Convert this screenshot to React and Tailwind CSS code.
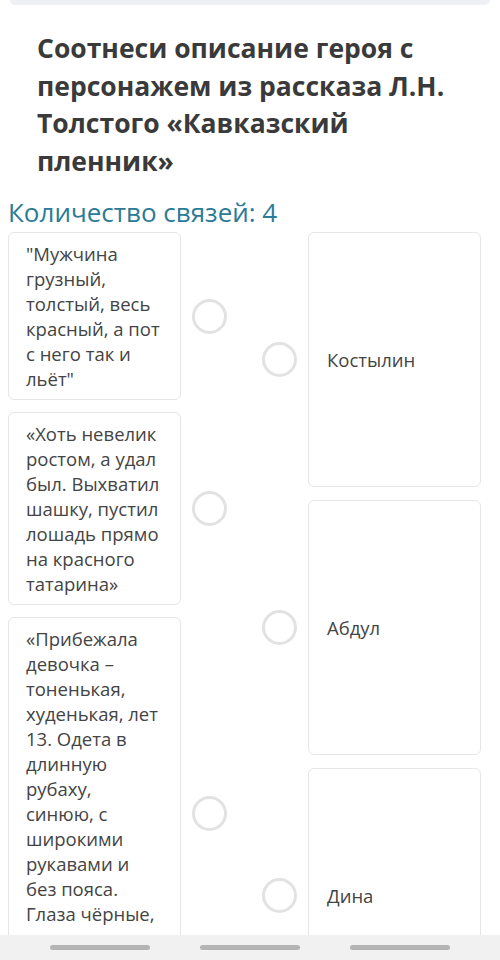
const leftItems = [
  '"Мужчина грузный, толстый, весь красный, а пот с него так и льёт"',
  '«Хоть невелик ростом, а удал был. Выхватил шашку, пустил лошадь прямо на красного татарина»',
  '«Прибежала девочка – тоненькая, худенькая, лет 13. Одета в длинную рубаху, синюю, с широкими рукавами и без пояса. Глаза чёрные, светлые, и лицом красивая»',
];

const rightItems = ['Костылин', 'Абдул', 'Дина'];

function Dot() {
  return <div className="w-[35px] h-[35px] shrink-0 rounded-full border-[3px] border-[#e2e2e2] bg-white" />;
}

export default function App() {
  return (
    <div className="min-h-screen bg-white text-[#444] font-['Open_Sans',sans-serif] pb-[60px]">
      <div className="mx-[10px] h-[5px] rounded-b-lg bg-[#eef0f3]" />

      <h1 className="mt-[25px] px-[37px] text-[26.5px] leading-[37.5px] font-bold text-[#3a3a3a]">
        Соотнеси описание героя с персонажем из рассказа Л.Н. Толстого «Кавказский пленник»
      </h1>

      <p className="mt-[16px] pl-[8px] text-[26px] leading-[32px] text-[#2b7b96]">Количество связей: 4</p>

      <div className="mt-[4px] flex pl-[8px]">
        <div className="flex flex-col gap-[12px]">
          {leftItems.map((t) => (
            <div key={t} className="flex items-center">
              <div className="w-[173px] rounded-md border border-[#e6e6e6] bg-white pl-[17px] pr-[20px] py-[8px] text-[18.5px] leading-[25px]">
                {t}
              </div>
              <div className="ml-[11px]">
                <Dot />
              </div>
            </div>
          ))}
        </div>

        <div className="ml-[35px] flex flex-col gap-[13px]">
          {rightItems.map((t) => (
            <div key={t} className="flex items-center">
              <Dot />
              <div className="ml-[11px] flex h-[255px] w-[173px] items-center rounded-md border border-[#e6e6e6] bg-white pl-[18px] text-[18.5px]">
                {t}
              </div>
            </div>
          ))}
        </div>
      </div>

      <div className="fixed bottom-0 left-0 right-0 flex h-[25px] items-center justify-center gap-[50px] bg-[#f1f1f1]">
        <div className="h-[5px] w-[100px] rounded-full bg-[#b4b4b4]" />
        <div className="h-[5px] w-[100px] rounded-full bg-[#b4b4b4]" />
        <div className="h-[5px] w-[100px] rounded-full bg-[#b4b4b4]" />
      </div>
    </div>
  );
}
